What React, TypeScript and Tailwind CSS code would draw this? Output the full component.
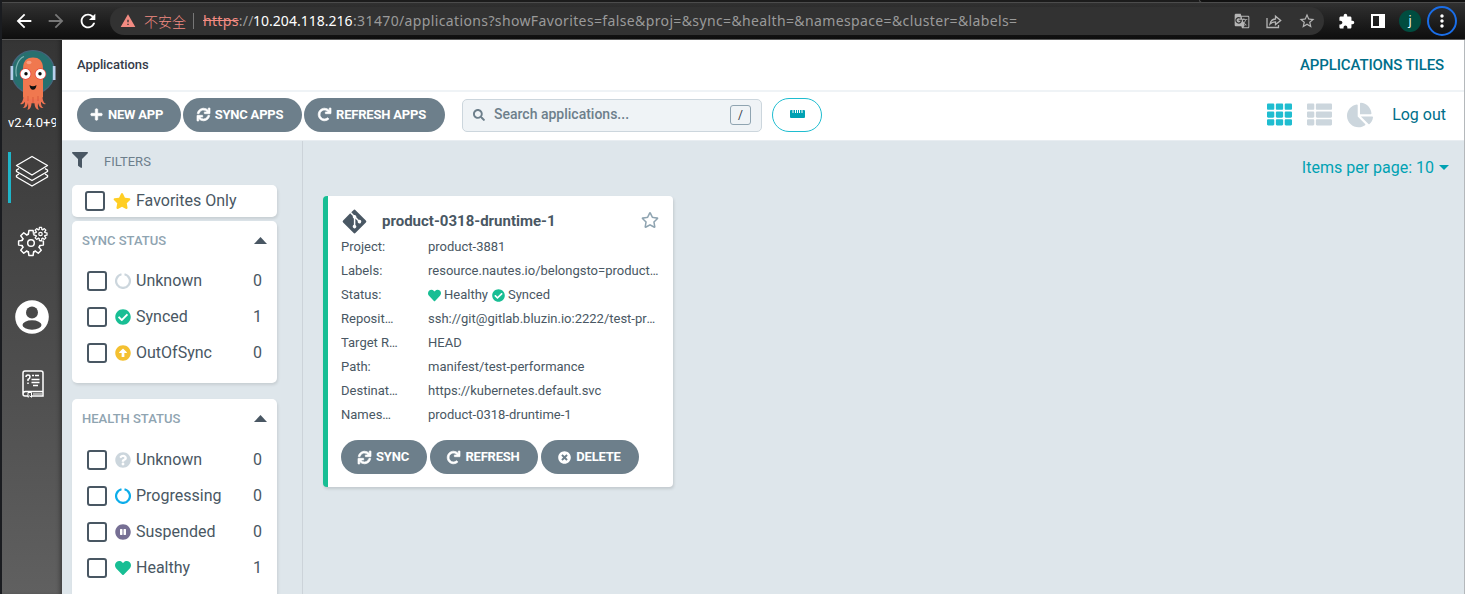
import React from 'react';
import {
  FaPlus, FaSync, FaRedo, FaSearch, FaTh, FaThList, FaChartPie,
  FaFilter, FaStar, FaRegStar, FaCheckCircle, FaArrowAltCircleUp, FaQuestionCircle, FaPauseCircle, FaHeart,
  FaTimesCircle, FaGitAlt,
} from 'react-icons/fa';
import { MdArrowBack, MdArrowForward, MdRefresh, MdWarning, MdGTranslate, MdStarBorder, MdExtension, MdMoreVert } from 'react-icons/md';

function BrowserBar() {
  return (
    <div className="flex h-10 flex-col border-b border-[#5a5a5a] bg-[#202020]">
      <div className="flex h-[3px] shrink-0 justify-end border-b border-[#4c4c4c] bg-[#1c1c1c]">
        <span className="h-[3px] w-[266px] rounded-bl border-b border-l border-[#4c4c4c] bg-[#111]" />
      </div>
      <div className="flex flex-1 items-center bg-linear-to-b from-[#313131] to-[#0e0e0e] pl-[11px] text-white">
        <MdArrowBack className="size-[22px]" />
        <MdArrowForward className="ml-[10px] size-[22px] text-[#777]" />
        <MdRefresh className="ml-[10px] size-[22px]" />
        <div className="ml-[11px] flex h-7 w-[1214px] items-center rounded-full bg-[#323232] pl-[10px] font-['Noto_Sans','Noto_Sans_CJK_SC',sans-serif] text-[14px] leading-7 whitespace-pre">
          <MdWarning className="size-4 shrink-0 text-[#f28b82]" />
          <span className="ml-[8px] w-[43px] font-['Noto_Sans_CJK_SC',sans-serif] font-light text-[#f28b82]">不安全</span>
          <span className="mr-[9px] ml-[6px] h-4 w-px bg-[#777]" />
          <span className="w-[50px] shrink-0 tracking-[0.33px] text-[#9a9a9a]">
            <span className="text-[#f28b82] line-through">https</span>://
          </span>
          <span className="w-[100px] shrink-0 tracking-[0.02px]">10.204.118.216</span>
          <span className="w-[680px] shrink-0 tracking-[0.37px] text-[#9a9a9a]">:31470/applications?showFavorites=false&amp;proj=&amp;sync=&amp;health=&amp;namespace=&amp;cluster=&amp;labels=</span>
          <span className="ml-auto flex items-center gap-[16px] pr-[8px] text-[#b5b5b5]">
            <MdGTranslate className="size-4" />
            <svg viewBox="0 0 16 16" className="size-4" fill="none" stroke="currentColor" strokeWidth="1.3">
              <path d="M1 5v9.500h11.500V12M4 11C4.500 8 6.500 6.200 9.500 6V3.200L14.700 7.500 9.500 11.600V8.900C7 8.900 5.500 9.500 4 11z" />
            </svg>
            <MdStarBorder className="size-[18px]" />
          </span>
        </div>
        <MdExtension className="ml-[14px] size-[17px]" />
        <span className="ml-[16px] h-[14px] w-[14px] border-2 border-r-[6px] border-white" />
        <span className="ml-[14px] flex size-[22px] items-center justify-center rounded-full bg-[#004d40] font-['Noto_Sans',sans-serif] text-[12px]">j</span>
        <span className="ml-[6px] flex size-[30px] items-center justify-center rounded-full border-2 border-[#1a6ee8]">
          <MdMoreVert className="size-5" />
        </span>
      </div>
    </div>
  );
}

function Octopus() {
  return (
    <svg viewBox="0 0 48 62" className="h-[62px] w-12">
      <circle cx="24" cy="23" r="21.500" fill="#27706f" stroke="#45647c" strokeWidth="1.200" />
      <path d="M7.500 27.500C5.500 18 9.500 9.500 15 7.500" fill="none" stroke="#7fb5b4" strokeWidth="1.200" />
      <path d="M1.500 17h2.700v14H1.500zM43.800 17h2.700v14h-2.700z" fill="#b8d0ee" />
      <path d="M14.500 44C15 50 13 54.500 11 54.700c2 1.500 4-.5 5-2 0 3-.5 5.500-2.500 6.300 3 .5 5-1.500 5.500-5 .2 3 .5 5-.7 6.800 3 0 4-3 4.200-6.500h3c.2 3.500 1.500 6.500 4.500 6.500-1.500-2-1.200-4-1-6.800 1 3.500 2.500 5.500 5.500 5-2-1-2.700-3.500-2.500-6.300 1.500 1.500 3 3.500 5 2-2.500-.2-4-4.700-3.500-10.700z" fill="#ef7352" />
      <path d="M14 20C14 11.500 18 8.500 24 8.500S34 11.500 34 20v28c-3 3-17 3-20 0z" fill="#f0784f" />
      <ellipse cx="20" cy="13.500" rx="2.500" ry="1.800" fill="#f8a083" />
      <circle cx="16.500" cy="25" r="5.800" fill="#e9463f" />
      <circle cx="31.500" cy="25" r="5.800" fill="#e9463f" />
      <circle cx="16.500" cy="25" r="5" fill="#fff" />
      <circle cx="31.500" cy="25" r="5" fill="#fff" />
      <circle cx="17" cy="24.700" r="1.700" fill="#0b0b0b" />
      <circle cx="31" cy="24.700" r="1.700" fill="#0b0b0b" />
      <path d="M20.500 36c2.300 1.800 4.700 1.800 7 0-.3 3-1.500 4.800-3.500 4.800S20.800 39 20.500 36z" fill="#111" />
      <path d="M19 52v-5M24 54v-6M29 52v-5" stroke="#d95a3c" strokeWidth="1" />
    </svg>
  );
}

const teeth = [0, 45, 90, 135, 180, 225, 270, 315];

function Gear({ x, y, s, w }: { x: number; y: number; s: number; w: number }) {
  return (
    <g transform={`translate(${x} ${y}) scale(${s})`} strokeWidth={w}>
      {teeth.map((a) => (
        <path key={a} transform={`rotate(${a})`} d="M-4-6.600Q-3.200-7.200-2.200-7.500L-1.800-10.500H1.800L2.200-7.500Q3.200-7.200 4-6.600" />
      ))}
      <circle r="2.800" />
    </g>
  );
}

function Sidebar() {
  return (
    <div className="flex w-[60px] shrink-0 flex-col bg-linear-to-b from-[#353535] to-[#606060] text-white shadow-[inset_-4px_0_4px_-2px_rgba(0,0,0,0.35)]">
      <div className="flex h-[72px] justify-center pt-[9px] pl-[2px]">
        <Octopus />
      </div>
      <div className="ml-[6px] w-12 overflow-hidden font-['Roboto',sans-serif] text-[13px] leading-[22px] whitespace-nowrap">v2.4.0+9a8b7c6</div>
      <div className="mt-[18px] ml-[6px] h-[51px] border-l-[3px] border-[#1fb5c9] pt-[3px] pl-[2px]">
        <svg viewBox="0 0 36 34" className="h-[34px] w-9" fill="none" stroke="white" strokeWidth="1.400" strokeLinejoin="round">
          <path d="M19 1.500 34.500 10.500 19 20 3.500 10.500z" />
          <path d="M6 13.700 3.500 15V16.500L19 25.500 34.500 16.500V15L32 13.700M6 19 3.500 20.500V22L19 31 34.500 22V20.500L32 19" />
        </svg>
      </div>
      <svg viewBox="0 0 30 30" className="mt-[23px] ml-[15px] size-[30px] overflow-visible" fill="none" stroke="white" strokeLinejoin="round">
        <Gear x={14} y={17} s={1.180} w={1.250} />
        <circle r="4.900" cx="14" cy="17" strokeWidth="0.800" strokeDasharray="1 1" opacity="0" />
        <circle cx="23.500" cy="8" r="7" fill="#424242" stroke="none" />
        <Gear x={23.500} y={8} s={0.620} w={2} />
      </svg>
      <svg viewBox="0 0 34 34" className="mt-[44px] ml-[13px] size-[34px]">
        <circle cx="17" cy="17" r="16.800" fill="#fff" />
        <circle cx="17" cy="12.500" r="6" fill="#484848" />
        <ellipse cx="17" cy="25" rx="9.500" ry="4.700" fill="#484848" />
      </svg>
      <svg viewBox="0 0 22 28" className="mt-[36px] ml-[20px] h-7 w-[22px]" fill="none" stroke="white" strokeWidth="1.500">
        <path d="M6 26H3Q1 26 1 24V3Q1 1 3 1H19Q21 1 21 3V21.500H3.500Q1 21.500 1 24M9 26H21V21.500M10 5.500h2m1 0h4M9.500 9.500h8M9.500 12.500h8M11 15.500h5M4 7q0-2 2-2t2 1.700T6 9.500V11M6 12.500V14" />
        <path d="M6 22.500h3.500v4.800L7.700 25.800 6 27.300zM11 24h9" strokeWidth="1" />
      </svg>
    </div>
  );
}

function Ring({ className }: { className: string }) {
  return (
    <svg viewBox="0 0 16 16" className={className} fill="none" stroke="currentColor" strokeWidth="2.200">
      <path d="M9.500 1.300A6.900 6.900 0 1 1 6.500 1.300" />
    </svg>
  );
}

function Row({ icon, label, count }: { icon: React.ReactNode; label: string; count: number }) {
  return (
    <div className="flex h-9 items-center pr-[15px] pl-[15px] text-[16px]">
      <Box />
      <span className="mb-px ml-2 flex size-4 items-center justify-center">{icon}</span>
      <span className="ml-[5px]">{label}</span>
      <span className="ml-auto">{count}</span>
    </div>
  );
}

function Box() {
  return <span className="size-5 shrink-0 rounded-[3px] border-2 border-[#495763]" />;
}

function Filters() {
  return (
    <div className="flex w-[241px] shrink-0 flex-col overflow-hidden border-r border-[#ccd3d9] pl-[10px] text-[#495763]">
      <div className="flex h-11 shrink-0 items-start pt-[11px]">
        <FaFilter className="size-4" />
        <span className="ml-4 pt-[2px] text-[13px] leading-4 text-[#6d7f8b]">FILTERS</span>
      </div>
      <div className="flex h-8 w-[205px] shrink-0 items-center rounded-[5px] bg-white pl-[13px] text-[16px] shadow-[1px_2px_3px_rgba(0,0,0,0.1)]">
        <Box />
        <FaStar className="mb-px ml-2 size-[18px] text-[#ffce25]" />
        <span className="ml-[5px]">Favorites Only</span>
      </div>
      <div className="mt-1 h-[162px] w-[205px] shrink-0 rounded-[5px] bg-white shadow-[1px_2px_3px_rgba(0,0,0,0.1)]">
        <GroupTitle text="SYNC STATUS" />
        <Row icon={<Ring className="size-4 text-[#ccd6dd]" />} label="Unknown" count={0} />
        <Row icon={<FaCheckCircle className="size-4 text-[#18be94]" />} label="Synced" count={1} />
        <Row icon={<FaArrowAltCircleUp className="size-4 text-[#f4c030]" />} label="OutOfSync" count={0} />
      </div>
      <div className="mt-4 h-[220px] w-[205px] shrink-0 rounded-[5px] bg-white shadow-[1px_2px_3px_rgba(0,0,0,0.1)]">
        <GroupTitle text="HEALTH STATUS" />
        <div className="h-px" />
        <Row icon={<FaQuestionCircle className="size-4 text-[#ccd6dd]" />} label="Unknown" count={0} />
        <Row icon={<Ring className="size-4 text-[#0dadea]" />} label="Progressing" count={0} />
        <Row icon={<FaPauseCircle className="size-4 text-[#766f94]" />} label="Suspended" count={0} />
        <Row icon={<FaHeart className="size-4 text-[#18be94]" />} label="Healthy" count={1} />
      </div>
    </div>
  );
}

function GroupTitle({ text }: { text: string }) {
  return (
    <div className="flex h-[42px] items-center justify-between pr-[10px] pb-[3px] pl-[10px] text-[13px] font-medium text-[#8fa4b1]">
      <span>{text}</span>
      <svg viewBox="0 0 13 7" className="h-[7px] w-[13px]">
        <path d="M0 7 6.500 0 13 7z" fill="#495763" />
      </svg>
    </div>
  );
}

function Pill({ icon, text, className }: { icon: React.ReactNode; text: string; className: string }) {
  return (
    <button className={`flex h-[34px] shrink-0 items-center justify-center gap-[5px] rounded-full bg-[#6d7f8b] text-[13px] font-bold tracking-[-0.2px] whitespace-nowrap text-white ${className}`}>
      {icon}
      <span>{text}</span>
    </button>
  );
}

const pillIcon = 'size-[13px] overflow-visible stroke-current stroke-[26px]';

const details: [string, React.ReactNode][] = [
  ['Project:', 'product-3881'],
  ['Labels:', 'resource.nautes.io/belongsto=product-3881'],
  ['Status:', (
    <span className="flex items-center">
      <FaHeart className="size-[13px] text-[#18be94]" />
      <span className="ml-[3px]">Healthy</span>
      <FaCheckCircle className="ml-[4px] size-[13px] text-[#18be94]" />
      <span className="ml-[3px]">Synced</span>
    </span>
  )],
  ['Repository:', 'ssh://git@gitlab.bluzin.io:2222/test-product.git'],
  ['Target Revision:', 'HEAD'],
  ['Path:', 'manifest/test-performance'],
  ['Destination:', 'https://kubernetes.default.svc'],
  ['Namespace:', 'product-0318-druntime-1'],
];

function AppCard() {
  return (
    <div className="flex h-[291px] w-[350px] flex-col rounded-[4px] border-l-[5px] border-[#18be94] bg-white pt-[12px] pr-[13px] pl-[13px] text-[#495763] shadow-[1px_2px_3px_rgba(0,0,0,0.12)]">
      <div className="flex h-[27px] items-center">
        <FaGitAlt className="size-[27px]" />
        <span className="ml-[14px] text-[15px] font-bold">product-0318-druntime-1</span>
        <FaRegStar className="mr-px mb-[3px] ml-auto size-[18px] text-[#8fa4b1]" />
      </div>
      <div className="text-[13px] leading-6">
        {details.map(([k, v]) => (
          <div key={k} className="flex h-6">
            <span className="mr-[30px] w-[57px] shrink-0 truncate">{k}</span>
            <span className="w-[232px] truncate">{v}</span>
          </div>
        ))}
      </div>
      <div className="mt-[13px] flex gap-[3px]">
        <Pill className="w-[86px] pr-px" icon={<FaSync className={pillIcon} />} text="SYNC" />
        <Pill className="w-[108px] pr-px" icon={<FaRedo className={pillIcon} />} text="REFRESH" />
        <Pill className="w-[98px] pr-px" icon={<FaTimesCircle className="size-[13px]" />} text="DELETE" />
      </div>
    </div>
  );
}

export default function App() {
  return (
    <div className="flex h-[594px] w-[1465px] overflow-hidden bg-[#1a1c20]">
      <div className="ml-[2px] flex w-[1463px] flex-col">
        <BrowserBar />
        <div className="flex min-h-0 flex-1 font-['Roboto',sans-serif]">
          <Sidebar />
          <div className="flex w-[1403px] flex-col border-r border-[#b4b8bb] bg-[#dee6eb]">
            <div className="flex h-[52px] shrink-0 items-center justify-between border-b-2 border-[#eff3f6] bg-white pr-[20px] pl-[15px]">
              <span className="text-[13px] font-medium tracking-[-0.08px] text-[#363c4a]">Applications</span>
              <span className="text-[15px] font-medium tracking-[-0.12px] text-[#006f8a]">APPLICATIONS TILES</span>
            </div>
            <div className="flex h-[49px] shrink-0 items-center border-b border-[#e8edf1] bg-white pr-[18px] pl-[15px] pb-[3px]">
              <Pill className="w-[104px] pr-[5px]" icon={<FaPlus className={pillIcon} />} text="NEW APP" />
              <Pill className="ml-[2px] w-[119px] pr-[5px]" icon={<FaSync className={pillIcon} />} text="SYNC APPS" />
              <Pill className="ml-[2px] w-[141px] pr-[5px]" icon={<FaRedo className={pillIcon} />} text="REFRESH APPS" />
              <div className="mt-px ml-[17px] flex h-[33px] w-[300px] items-center rounded-[5px] border border-[#ccd6dd] bg-[#eff3f6] pr-[10px] pb-px pl-[10px] text-[#6d7f8b]">
                <FaSearch className="size-3" />
                <span className="ml-[9px] text-[14px] font-medium">Search applications...</span>
                <span className="ml-auto flex h-5 w-[21px] items-center justify-center rounded-[3px] border border-[#8fa4b1] text-[12px] text-[#363c4a]">/</span>
              </div>
              <div className="ml-[10px] flex h-[34px] w-[50px] items-center justify-center rounded-full border border-[#1fbdd0] text-[#00a2b3]">
                <svg viewBox="0 0 15 8" className="mb-px h-2 w-[15px]">
                  <path d="M1 0H2.500V3H3.500V0H5V3H6V0H7V3H8V0H9V3H10V0H11.500V3H12.500V0H14Q15 0 15 1V7Q15 8 14 8H1Q0 8 0 7V1Q0 0 1 0z" fill="currentColor" />
                </svg>
              </div>
              <FaTh className="ml-auto size-[25px] text-[#1fbdd0]" />
              <FaThList className="ml-[15px] size-[25px] text-[#ccd6dd]" />
              <FaChartPie className="ml-[15px] size-[26px] text-[#ccd6dd]" />
              <span className="ml-[19px] text-[16px] text-[#006f8a]">Log out</span>
            </div>
            <div className="flex min-h-0 flex-1">
              <Filters />
              <div className="flex flex-1 flex-col pl-5">
                <div className="flex h-[55px] items-center justify-end pr-[15px] pb-[2px] text-[16px] text-[#00a2b3]">
                  <span>Items per page: 10</span>
                  <svg viewBox="0 0 10 5" className="ml-[5px] h-[5px] w-[10px]">
                    <path d="M0 0H10L5 5z" fill="currentColor" />
                  </svg>
                </div>
                <AppCard />
              </div>
            </div>
          </div>
        </div>
      </div>
    </div>
  );
}
